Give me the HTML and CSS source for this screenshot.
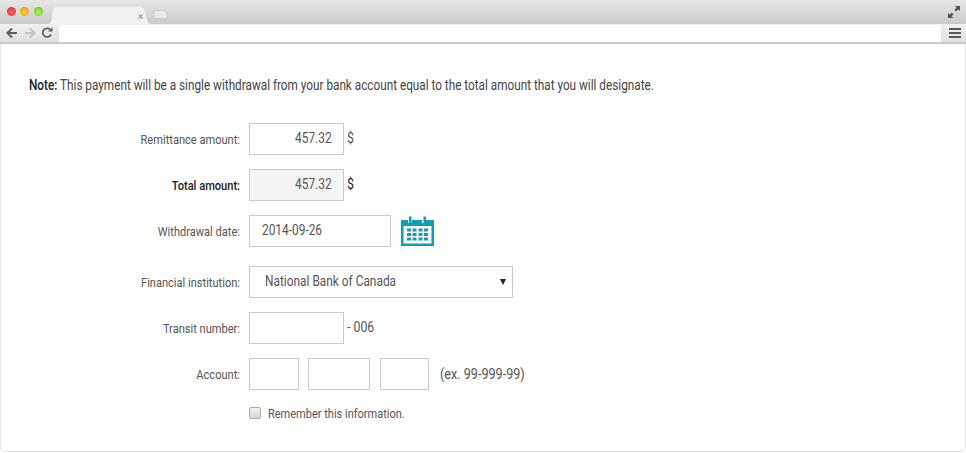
FILE: index.html
```html
<!DOCTYPE html>
<html lang="en">
<head>
<meta charset="utf-8">
<title>Payment</title>
<link rel="stylesheet" href="styles.css">
</head>
<body>
<div class="window">
  <header class="titlebar">
    <div class="lights">
      <span class="light red"></span><span class="light amber"></span><span class="light green"></span>
    </div>
    <svg class="tab" width="104" height="17" viewBox="0 0 104 17"><path d="M0 17C2 17 3 15 3.500 12L5 3C5.500 1 6.500 0 9 0H92C95 0 96 1 96.500 3L99 12C100 15 101 17 104 17Z" fill="#f1f1f1"/><path d="M90.500 7.500l4 4M94.500 7.500l-4 4" stroke="#a0a0a0" stroke-width="1.200"/></svg>
    <svg class="newtab" width="17" height="9" viewBox="0 0 17 9"><path d="M1 .5H12C13 .5 13.500 1 14 2L16 8.500H4C3 8.500 2.500 8 2.300 7Z" fill="#e8e8e8" stroke="#c4c4c4" stroke-width=".7"/></svg>
    <svg class="resize" width="14" height="14" viewBox="0 0 14 14"><path d="M8 1H13V6L11.200 4.500 9.200 6.500 7.500 4.800 9.500 2.800ZM6 13H1V8L2.800 9.500 4.800 7.500 6.500 9.200 4.500 11.200Z" fill="#555"/></svg>
  </header>
  <nav class="toolbar">
    <svg class="nav" width="12" height="12" viewBox="0 0 12 12"><path d="M6 1.500L1.500 6 6 10.500M2 6H11" fill="none" stroke="#5a6066" stroke-width="2"/></svg>
    <svg class="nav" width="12" height="12" viewBox="0 0 12 12"><path d="M6 1.500L10.500 6 6 10.500M10 6H1" fill="none" stroke="#c2c4c6" stroke-width="2"/></svg>
    <svg class="nav" width="12" height="12" viewBox="0 0 12 12"><path d="M10 7.500A4.300 4.300 0 1 1 9.500 3" fill="none" stroke="#5a6066" stroke-width="1.800"/><path d="M7 4.500H11.500V0Z" fill="#5a6066"/></svg>
    <div class="address"></div>
    <svg class="menu" width="12" height="10" viewBox="0 0 12 10"><path d="M0 1H12M0 5H12M0 9H12" stroke="#555b60" stroke-width="2"/></svg>
  </nav>
  <main class="page">
    <p class="note"><b>Note:</b> This payment will be a single withdrawal from your bank account equal to the total amount that you will designate.</p>
    <form class="form">
      <div class="row">
        <label class="label">Remittance amount:</label>
        <div class="field w94 amount"><span class="value-r">457.32</span></div>
        <span class="unit">$</span>
      </div>
      <div class="row">
        <label class="label strong">Total amount:</label>
        <div class="field w94 amount readonly"><span class="value-r">457.32</span></div>
        <span class="unit strong">$</span>
      </div>
      <div class="row">
        <label class="label">Withdrawal date:</label>
        <div class="field date"><span class="value-l">2014-09-26</span></div>
        <svg class="calendar" width="35" height="32" viewBox="0 0 35 32">
          <path d="M1 5H8V8H12V5H22V8H26V5H34V31H1Z" fill="#0f9fb5"/>
          <path d="M9 1.500H11.500V9H9ZM23.500 1.500H26V9H23.500Z" fill="#0f9fb5"/>
          <path d="M3.500 11H31.500V28.500H3.500Z" fill="#fff"/>
          <path d="M7 13.500H11V16.500H7ZM12.500 13.500H16.500V16.500H12.500ZM18.500 13.500H22.500V16.500H18.500ZM24 13.500H28V16.500H24ZM7 18H11V21H7ZM12.500 18H16.500V21H12.500ZM18.500 18H22.500V21H18.500ZM24 18H28V21H24ZM7 22.500H11V25.500H7ZM12.500 22.500H16.500V25.500H12.500ZM18.500 22.500H22.500V25.500H18.500ZM24 22.500H28V25.500H24Z" fill="#0f9fb5"/>
        </svg>
      </div>
      <div class="row select-row">
        <label class="label">Financial institution:</label>
        <div class="field select">
          <span class="value-l">National Bank of Canada</span>
          <span class="caret"></span>
        </div>
      </div>
      <div class="row">
        <label class="label">Transit number:</label>
        <input class="field w94" type="text">
        <span class="unit">- 006</span>
      </div>
      <div class="row">
        <label class="label">Account:</label>
        <div class="account">
          <input class="field a1" type="text">
          <input class="field a2" type="text">
          <input class="field a3" type="text">
        </div>
        <span class="hint">(ex. 99-999-99)</span>
      </div>
      <div class="row check-row">
        <span class="label"></span>
        <span class="checkbox"></span>
        <span class="check-text">Remember this information.</span>
      </div>
    </form>
  </main>
</div>
</body>
</html>
```

FILE: styles.css
```css
* { box-sizing: border-box; }
html, body { margin: 0; padding: 0; background: #fff; }
body { width: 966px; height: 453px; overflow: hidden; font-family: Roboto, "Liberation Sans", sans-serif; color: #4a4a4a; }
.window { display: flex; flex-direction: column; height: 453px; }
.titlebar { height: 24px; flex: none; display: flex; align-items: flex-start; background: linear-gradient(#e6e6e6, #cbcbcb); }
.lights { display: flex; gap: 4.500px; padding: 6.500px 0 0 6.500px; width: 48px; flex: none; }
.light { width: 9px; height: 9px; border-radius: 50%; }
.red { background: radial-gradient(circle at 50% 60%, #f66, #d42c2c); }
.amber { background: radial-gradient(circle at 50% 60%, #fc3, #e09a10); }
.green { background: radial-gradient(circle at 50% 60%, #af5, #62b81c); }
.tab { flex: none; margin-top: 7px; }
.newtab { flex: none; margin: 10px 0 0 0; }
.resize { margin: 5px 5px 0 auto; flex: none; }
.toolbar { height: 20px; flex: none; display: flex; align-items: center; gap: 5px; background: linear-gradient(#f1f1f1, #e0e0e0); border-bottom: 2px solid #c9c9c9; padding: 0 5px 0 6px; }
.nav { flex: none; margin-right: .5px; }
.address { flex: 1; height: 17px; background: #fff; border-radius: 2px; margin-right: 3px; }
.menu { flex: none; }
.page { flex: 1; border: 1px solid #e4e4e4; border-top: 0; border-radius: 0 0 5px 5px; margin-bottom: 1px; padding: 32px 0 0 28px; }
.note { margin: 0; font-size: 14px; line-height: 18px; color: #444; white-space: nowrap; width: max-content; transform: scaleX(.84); transform-origin: left center; }
.note b { color: #222; font-weight: 500; }
.form { display: flex; flex-direction: column; margin: 29px 0 0 -28px; }
.row { display: flex; align-items: center; height: 32px; margin-bottom: 14px; }
.label { width: 239px; flex: none; text-align: right; margin-right: 9px; font-size: 13.500px; color: #555; transform: scaleX(.82); transform-origin: right center; }
.strong { color: #222; font-weight: 500; }
.field { display: block; height: 32px; border: 1px solid #bfcccc; background: #fff; font: 14.500px Roboto, sans-serif; line-height: 30px; color: #555; border-radius: 0; outline: 0; padding: 0; }
.value-r, .value-l { display: inline-block; transform: scaleX(.82); }
.value-r { transform-origin: right center; }
.value-l { transform-origin: left center; }
.w94 { width: 95px; }
.amount { text-align: right; padding-right: 11px; }
.readonly { background: #f4f4f4; }
.unit { margin-left: 3px; font-size: 14.500px; color: #555; position: relative; top: -1px; transform: scaleX(.85); transform-origin: left center; }
.unit.strong { color: #222; font-weight: 400; }
.date { width: 142px; padding-left: 12px; }
.calendar { margin-left: 9px; flex: none; }
.select-row { margin-top: 5px; }
.select { width: 264px; display: flex; align-items: center; justify-content: space-between; padding: 0 6px 0 15px; }
.caret { width: 0; height: 0; border-left: 3.500px solid transparent; border-right: 3.500px solid transparent; border-top: 6px solid #222; }
.account { display: flex; }
.a1 { width: 50px; margin-right: 9px; }
.a2 { width: 62px; margin-right: 10px; }
.a3 { width: 49px; }
.hint { margin-left: 11px; font-size: 14.500px; color: #555; transform: scaleX(.87); transform-origin: left center; }
.check-row { height: 18px; margin-top: 0; margin-bottom: 0; }
.checkbox { width: 12px; height: 12px; border: 1px solid #a9a9a9; border-radius: 2px; background: linear-gradient(#f2f2f2, #d9d9d9); flex: none; }
.check-text { margin-left: 7px; font-size: 13.500px; color: #555; transform: scaleX(.815); transform-origin: left center; }
```
